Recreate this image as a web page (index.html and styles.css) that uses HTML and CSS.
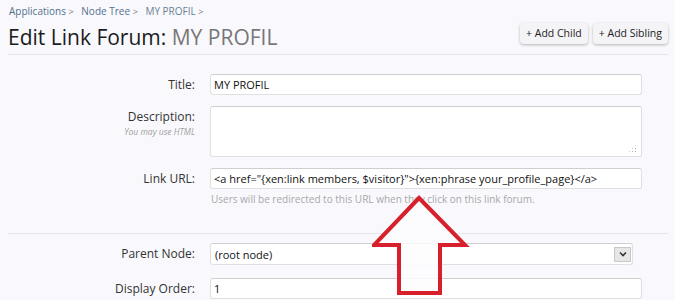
FILE: index.html
```html
<!DOCTYPE html>
<html lang="en">
<head>
    <meta charset="UTF-8">
    <title>Edit Link Forum: MY PROFIL</title>
    <link rel="stylesheet" href="styles.css">
</head>
<body>
    <div class="page">
        <div class="crumbs">
            <a href="#">Applications</a> <span class="arrow">&gt;</span>
            <a href="#">Node Tree</a> <span class="arrow">&gt;</span>
            <a href="#" class="current">MY PROFIL</a> <span class="arrow">&gt;</span>
        </div>

        <div class="title-bar">
            <h1>Edit Link Forum: <span class="muted">MY PROFIL</span></h1>
            <div class="top-ctrl">
                <a href="#" class="button">+ Add Child</a>
                <a href="#" class="button">+ Add Sibling</a>
            </div>
        </div>

        <form class="xen-form">
            <fieldset class="group">
                <div class="ctrl-unit">
                    <label class="ctrl-label">Title:</label>
                    <div class="ctrl-input">
                        <input type="text" class="text-ctrl" value="MY PROFIL">
                    </div>
                </div>

                <div class="ctrl-unit">
                    <label class="ctrl-label">Description:<span class="hint">You may use HTML</span></label>
                    <div class="ctrl-input">
                        <div class="textarea-wrap">
                            <textarea class="text-ctrl area"></textarea>
                            <span class="grip"></span>
                        </div>
                    </div>
                </div>

                <div class="ctrl-unit">
                    <label class="ctrl-label">Link URL:</label>
                    <div class="ctrl-input">
                        <input type="text" class="text-ctrl" value='<a href="{xen:link members, $visitor}">{xen:phrase your_profile_page}</a>'>
                        <p class="explain">Users will be redirected to this URL when they click on this link forum.</p>
                    </div>
                </div>
            </fieldset>

            <fieldset class="group second">
                <div class="ctrl-unit">
                    <label class="ctrl-label">Parent Node:</label>
                    <div class="ctrl-input">
                        <div class="select-ctrl">
                            <span>(root node)</span>
                            <span class="select-btn">
                                <svg width="8" height="6" viewBox="0 0 8 6"><path d="M1 1.5 L4 4.5 L7 1.5" fill="none" stroke="#333" stroke-width="1.6"/></svg>
                            </span>
                        </div>
                    </div>
                </div>

                <div class="ctrl-unit">
                    <label class="ctrl-label">Display Order:</label>
                    <div class="ctrl-input">
                        <input type="text" class="text-ctrl" value="1">
                    </div>
                </div>
            </fieldset>
        </form>

        <!-- red arrow drawn over the form -->
        <svg class="pointer" width="100" height="104" viewBox="0 0 100 104">
            <polygon points="47,3 93,50 68,50 68,98 27,98 27,50 2,50" fill="#fdfdfe" fill-opacity="0.85" stroke="#d6202b" stroke-width="4" stroke-linejoin="miter"/>
        </svg>
    </div>
</body>
</html>
```

FILE: styles.css
```css
body {
    margin: 0;
    background-color: #f9f9fd;
    font-family: "Open Sans", "DejaVu Sans", sans-serif;
    color: #222;
}

.page {
    position: relative;
    padding: 0 7px 0 8px;
    height: 300px;
    overflow: hidden;
}

.crumbs {
    padding-top: 4px;
    font-size: 10px;
    line-height: 14px;
    padding-left: 1px;
}

.crumbs a {
    color: #52708e;
    text-decoration: none;
}

.crumbs a.current {
    color: #6a7f95;
}

.crumbs .arrow {
    color: #777;
    font-size: 9px;
    margin-right: 5px;
}

.title-bar {
    display: flex;
    justify-content: space-between;
    align-items: flex-end;
    border-bottom: 1px solid #e2e6ee;
    padding-bottom: 3px;
}

.title-bar h1 {
    margin: 4px 0 0 0;
    font-size: 21px;
    line-height: 28px;
    font-weight: normal;
    color: #1c1c1c;
}

.title-bar h1 .muted {
    color: #777;
}

.top-ctrl {
    display: flex;
    gap: 5px;
    margin-bottom: 7px;
}

.button {
    display: inline-block;
    height: 21px;
    line-height: 21px;
    padding: 0 6px;
    font-size: 10.5px;
    color: #222;
    text-decoration: none;
    background-color: #f4f4f6;
    border-radius: 4px;
    box-shadow: 0 1px 3px rgba(0, 0, 0, 0.28);
}

.xen-form {
    margin: 0;
}

.group {
    margin: 0;
    padding: 19px 0 0 0;
    border: none;
}

.group.second {
    border-top: 1px solid #e2e6ee;
    margin-top: 16px;
    padding-top: 9px;
}

.ctrl-unit {
    display: grid;
    grid-template-columns: 187px 432px;
    column-gap: 15px;
    margin-bottom: 11px;
}

.group.second .ctrl-unit {
    margin-bottom: 13px;
}

.ctrl-label {
    text-align: right;
    font-size: 12px;
    line-height: 16px;
    padding-top: 3px;
    color: #333;
}

.ctrl-label .hint {
    display: block;
    font-size: 8.5px;
    line-height: 12px;
    font-style: italic;
    color: #a0a0a0;
    margin-top: 1px;
}

.text-ctrl {
    box-sizing: border-box;
    display: block;
    width: 432px;
    height: 21px;
    margin: 0;
    padding: 0 3px;
    font-family: "Open Sans", "DejaVu Sans", sans-serif;
    font-size: 11px;
    color: #111;
    background-color: #fff;
    border: 1px solid #e0e0e0;
    border-top-color: #cfcfcf;
    border-radius: 3px;
    outline: none;
}

.textarea-wrap {
    position: relative;
    width: 432px;
}

.text-ctrl.area {
    height: 51px;
    resize: none;
}

.grip {
    position: absolute;
    right: 5px;
    bottom: 4px;
    width: 9px;
    height: 9px;
    background-image: radial-gradient(circle, #aaa 0.8px, transparent 1px);
    background-size: 3px 3px;
    clip-path: polygon(100% 0, 100% 100%, 0 100%);
}

.explain {
    margin: 3px 0 0 1px;
    font-size: 10px;
    line-height: 14px;
    color: #a8a8a8;
}

.select-ctrl {
    box-sizing: border-box;
    display: flex;
    align-items: center;
    justify-content: space-between;
    width: 423px;
    height: 22px;
    padding: 0 1px 0 4px;
    font-size: 11px;
    color: #111;
    background-color: #fff;
    border: 1px solid #e0e0e0;
    border-top-color: #cfcfcf;
    border-radius: 3px;
}

.select-btn {
    box-sizing: border-box;
    display: flex;
    align-items: center;
    justify-content: center;
    width: 17px;
    height: 15px;
    background-color: #e6e6e6;
    border: 1px solid #c8c8c8;
}

.pointer {
    position: absolute;
    left: 372px;
    top: 195px;
}
```
